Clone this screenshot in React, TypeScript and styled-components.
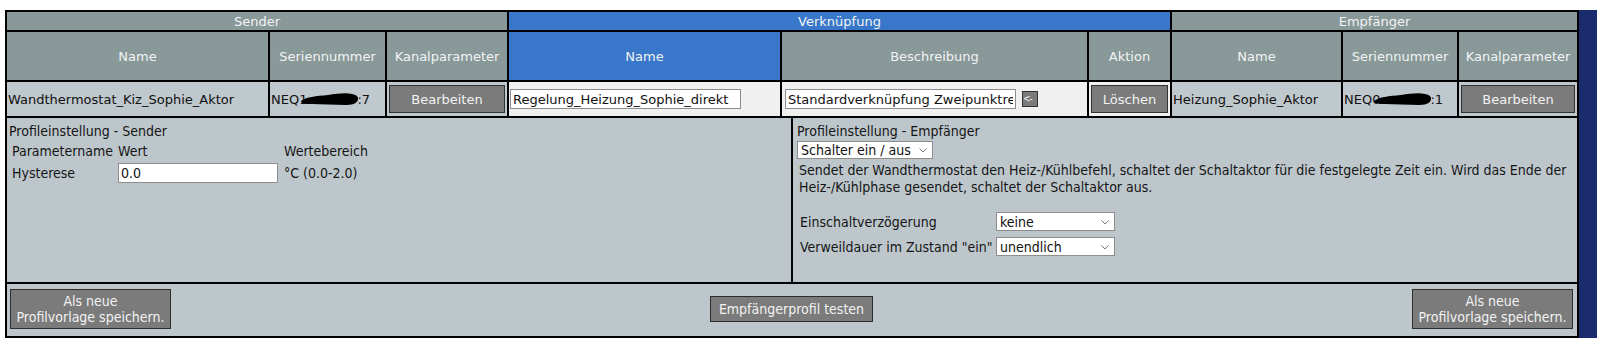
import React from "react";
import styled, { createGlobalStyle } from "styled-components";

const Global = createGlobalStyle`
  html, body { margin: 0; padding: 0; background: #ffffff; }
  body { font-family: "DejaVu Sans", Verdana, sans-serif; font-size: 13px; }
  * { box-sizing: border-box; }
`;

const Page = styled.div`
  display: flex;
  align-items: stretch;
  padding: 10px 0 0 5px;
`;

const Table = styled.div`
  width: 1574px;
  border: 2px solid #000;
  background: #000;
  display: flex;
  flex-direction: column;
  gap: 2px;
`;

const Strip = styled.div`
  width: 18px;
  background: #1b2c6c;
`;

const TopGrid = styled.div`
  display: grid;
  grid-template-columns: 261px 115px 120px 271px 305px 81px 169px 114px 118px;
  grid-template-rows: 18px 48px 34px;
  gap: 2px;
  background: #000;
`;

const Head = styled.div<{ $blue?: boolean; $span?: number }>`
  grid-column: span ${(p) => p.$span ?? 1};
  background: ${(p) => (p.$blue ? "#3877c9" : "#899898")};
  color: #f1f4f4;
  display: flex;
  align-items: center;
  justify-content: center;
  font-size: 13px;
  white-space: nowrap;
`;

const Cell = styled.div<{ $light?: boolean; $pad?: number }>`
  background: ${(p) => (p.$light ? "#f0f0f0" : "#bfc8cc")};
  color: #111;
  display: flex;
  align-items: center;
  padding: 0 1px 0 ${(p) => p.$pad ?? 1}px;
  white-space: nowrap;
  overflow: hidden;
  font-size: 13px;
`;

const CellButton = styled.button`
  flex: 1;
  height: 28px;
  margin: 0 1px;
  background: #7b7b7b;
  border: 1px solid #333;
  color: #f2f2f2;
  font-family: "DejaVu Sans", Verdana, sans-serif;
  font-size: 13px;
  padding: 0;
`;

const TextInput = styled.input<{ $w: number }>`
  width: ${(p) => p.$w}px;
  height: 20px;
  background: #fff;
  border: 1px solid #8d8d8d;
  font-family: "DejaVu Sans", Verdana, sans-serif;
  font-size: 13px;
  color: #111;
  padding: 0 2px;
  margin: 0;
  outline: none;
`;

const ArrowButton = styled.button`
  width: 16px;
  height: 16px;
  margin-left: 6px;
  padding: 0;
  background: #7b7b7b;
  border: 1px solid #333;
  color: #f2f2f2;
  font-family: "DejaVu Sans Condensed", "DejaVu Sans", sans-serif;
  font-size: 10px;
  letter-spacing: -1px;
  line-height: 12px;
  text-align: left;
  white-space: nowrap;
  overflow: hidden;
`;

const Serial = styled.span`
  display: inline-flex;
  align-items: center;
`;

const Blob = styled.svg`
  margin: 0 -3px 0 -7px;
`;

const ProfileRow = styled.div`
  display: grid;
  grid-template-columns: 784px 784px;
  gap: 2px;
  height: 164px;
`;

const ProfileCell = styled.div<{ $pad: number }>`
  background: #bdc7cb;
  color: #151515;
  font-family: "DejaVu Sans Condensed", "DejaVu Sans", sans-serif;
  font-size: 14px;
  padding: 5px 2px 0 ${(p) => p.$pad}px;
  display: flex;
  flex-direction: column;
  align-items: flex-start;
`;

const ProfileTitle = styled.div`
  line-height: 16px;
`;

const ParamGrid = styled.div`
  display: grid;
  grid-template-columns: 106px 166px auto;
  grid-template-rows: 17px 28px;
  align-items: center;
  padding-left: 3px;
  margin-top: 3px;
`;

const ParamInput = styled.input`
  width: 160px;
  height: 20px;
  background: #fff;
  border: 1px solid #8d8d8d;
  font-family: "DejaVu Sans Condensed", "DejaVu Sans", sans-serif;
  font-size: 14px;
  color: #111;
  padding: 0 2px;
  margin: 0;
`;

const SelectWrap = styled.span<{ $w: number; $h: number }>`
  position: relative;
  display: inline-block;
  width: ${(p) => p.$w}px;
  height: ${(p) => p.$h}px;
`;

const Select = styled.select`
  appearance: none;
  -webkit-appearance: none;
  width: 100%;
  height: 100%;
  background: #fff;
  border: 1px solid #8d8d8d;
  border-radius: 0;
  font-family: "DejaVu Sans Condensed", "DejaVu Sans", sans-serif;
  font-size: 14px;
  color: #111;
  padding: 0 0 0 3px;
  margin: 0;
`;

const Chevron = styled.svg`
  position: absolute;
  right: 6px;
  top: 50%;
  margin-top: -2px;
  pointer-events: none;
`;

const SelectTop = styled.div`
  margin-top: 2px;
`;

const Description = styled.div`
  margin-top: 3px;
  padding-left: 2px;
  line-height: 17px;
  width: 778px;
`;

const OptionGrid = styled.div`
  display: grid;
  grid-template-columns: 196px auto;
  row-gap: 6px;
  align-items: center;
  margin-top: 16px;
  padding-left: 3px;
`;

const ButtonRow = styled.div`
  height: 52px;
  background: #bdc7cb;
  display: grid;
  grid-template-columns: 1fr auto 1fr;
  align-items: center;
  padding: 0 4px 2px 3px;
`;

const ActionButton = styled.button<{ $tall?: boolean; $align?: string }>`
  justify-self: ${(p) => p.$align ?? "center"};
  width: ${(p) => (p.$tall ? "161px" : "163px")};
  height: ${(p) => (p.$tall ? "40px" : "26px")};
  background: #7b7b7b;
  border: 1px solid #2e2e2e;
  color: #f2f2f2;
  font-family: "DejaVu Sans Condensed", "DejaVu Sans", sans-serif;
  font-size: 14px;
  line-height: 16px;
  padding: 0;
  white-space: nowrap;
`;

const ChevronIcon = () => (
  <Chevron width="8" height="5" viewBox="0 0 8 5">
    <path d="M0.5 0.5 L4 4 L7.5 0.5" fill="none" stroke="#777" strokeWidth="1" />
  </Chevron>
);

const RedactBlob = () => (
  <Blob width="60" height="16" viewBox="0 0 60 16">
    <path d="M1 10 C 6 6, 16 5, 28 4 C 40 2, 52 1, 57 5 C 60 9, 57 14, 46 14 C 34 14, 22 13, 12 13 C 6 13, 1 13, 1 10 Z" fill="#000" />
  </Blob>
);

const FancySelect = ({ w, h, value }: { w: number; h: number; value: string }) => (
  <SelectWrap $w={w} $h={h}>
    <Select defaultValue={value}>
      <option value={value}>{value}</option>
    </Select>
    <ChevronIcon />
  </SelectWrap>
);

export default function App() {
  return (
    <>
      <Global />
      <Page>
        <Table>
          <TopGrid>
            <Head $span={3}>Sender</Head>
            <Head $span={3} $blue>Verknüpfung</Head>
            <Head $span={3}>Empfänger</Head>

            <Head>Name</Head>
            <Head>Seriennummer</Head>
            <Head>Kanalparameter</Head>
            <Head $blue>Name</Head>
            <Head>Beschreibung</Head>
            <Head>Aktion</Head>
            <Head>Name</Head>
            <Head>Seriennummer</Head>
            <Head>Kanalparameter</Head>

            <Cell>Wandthermostat_Kiz_Sophie_Aktor</Cell>
            <Cell>
              <Serial>
                NEQ1
                <RedactBlob />
                :7
              </Serial>
            </Cell>
            <Cell>
              <CellButton>Bearbeiten</CellButton>
            </Cell>
            <Cell $light>
              <TextInput $w={231} defaultValue="Regelung_Heizung_Sophie_direkt" />
            </Cell>
            <Cell $light $pad={3}>
              <TextInput $w={231} defaultValue="Standardverknüpfung Zweipunktregelung" />
              <ArrowButton>&lt;-</ArrowButton>
            </Cell>
            <Cell $light>
              <CellButton>Löschen</CellButton>
            </Cell>
            <Cell>Heizung_Sophie_Aktor</Cell>
            <Cell>
              <Serial>
                NEQ0
                <RedactBlob />
                :1
              </Serial>
            </Cell>
            <Cell>
              <CellButton>Bearbeiten</CellButton>
            </Cell>
          </TopGrid>

          <ProfileRow>
            <ProfileCell $pad={2}>
              <ProfileTitle>Profileinstellung - Sender</ProfileTitle>
              <ParamGrid>
                <span>Parametername</span>
                <span>Wert</span>
                <span>Wertebereich</span>
                <span>Hysterese</span>
                <ParamInput defaultValue="0.0" />
                <span>°C (0.0-2.0)</span>
              </ParamGrid>
            </ProfileCell>
            <ProfileCell $pad={4}>
              <ProfileTitle>Profileinstellung - Empfänger</ProfileTitle>
              <SelectTop>
                <FancySelect w={136} h={18} value="Schalter ein / aus" />
              </SelectTop>
              <Description>
                Sendet der Wandthermostat den Heiz-/Kühlbefehl, schaltet der Schaltaktor für die festgelegte Zeit ein. Wird das Ende der Heiz-/Kühlphase gesendet, schaltet der Schaltaktor aus.
              </Description>
              <OptionGrid>
                <span>Einschaltverzögerung</span>
                <FancySelect w={119} h={19} value="keine" />
                <span>Verweildauer im Zustand "ein"</span>
                <FancySelect w={119} h={19} value="unendlich" />
              </OptionGrid>
            </ProfileCell>
          </ProfileRow>

          <ButtonRow>
            <ActionButton $tall $align="start">
              Als neue
              <br />
              Profilvorlage speichern.
            </ActionButton>
            <ActionButton>Empfängerprofil testen</ActionButton>
            <ActionButton $tall $align="end">
              Als neue
              <br />
              Profilvorlage speichern.
            </ActionButton>
          </ButtonRow>
        </Table>
        <Strip />
      </Page>
    </>
  );
}
